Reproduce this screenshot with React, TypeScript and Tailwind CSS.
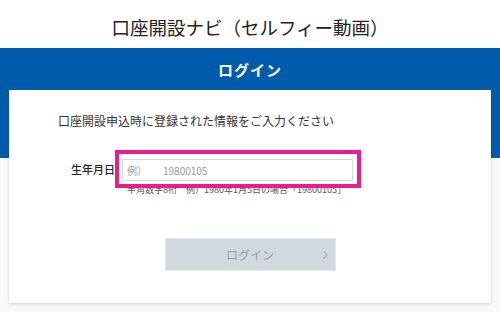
import React from 'react';

const App: React.FC = () => {
  return (
    <div
      className="w-[500px] h-[312px] overflow-hidden bg-[#f8f9fb] text-[#333]"
      style={{ fontFamily: '"Noto Sans CJK JP", "Noto Sans", sans-serif' }}
    >
      {/* Header */}
      <div className="h-[48px] bg-white flex items-center justify-center pt-[6px]">
        <h1 className="text-[18.5px] leading-none text-[#222]">口座開設ナビ（セルフィー動画）</h1>
      </div>

      {/* Blue band */}
      <div className="relative">
        <div className="h-[110px] bg-[#005bac]" />
        <div className="absolute inset-x-0 top-0">
          <div className="h-[42px] flex items-center justify-center">
            <h2 className="text-[15px] font-bold text-white leading-none tracking-[1px]">ログイン</h2>
          </div>

          {/* Card */}
          <div className="mx-[9px] h-[213px] bg-white shadow-[0_1px_3px_rgba(0,0,0,0.18)] pt-[25px]">
            <p className="ml-[49px] text-[12px] leading-none text-[#333]">口座開設申込時に登録された情報をご入力ください</p>

            <div className="mt-[32px] flex items-start">
              <label className="w-[106px] pt-[5px] text-right text-[11px] font-medium leading-none text-[#222]">生年月日</label>
              <div className="relative ml-[7px]">
                <div className="w-[231px] h-[22px] border border-[#d5dadd] flex items-center pl-[4px] text-[10px] text-[#9a9a9a]">
                  <span>例）</span>
                  <span className="ml-[16px]">19800105</span>
                </div>
                <p className="mt-[4px] ml-[5px] text-[9px] leading-none text-[#555] whitespace-nowrap">半角数字8桁　例）1980年1月5日の場合「19800105」</p>
                {/* highlight frame */}
                <div className="absolute left-[-7px] top-[-9px] w-[246px] h-[38px] border-[4px] border-[#ec1c8c]" />
              </div>
            </div>

            <div className="mt-[44px] flex justify-center">
              <button className="relative w-[171px] h-[33px] bg-[#d0d9dd] border border-[#e4e9ec] text-[12px] text-[#9aa2a6] flex items-center justify-center">
                ログイン
                <span className="absolute right-[6px] top-1/2 -translate-y-1/2">
                  <svg width="7" height="10" viewBox="0 0 7 10" fill="none">
                    <path d="M1.5 1.5 L5 5 L1.5 8.5" stroke="#a7afb3" strokeWidth="1.2" />
                  </svg>
                </span>
              </button>
            </div>
          </div>
        </div>
      </div>
    </div>
  );
};

export default App;
